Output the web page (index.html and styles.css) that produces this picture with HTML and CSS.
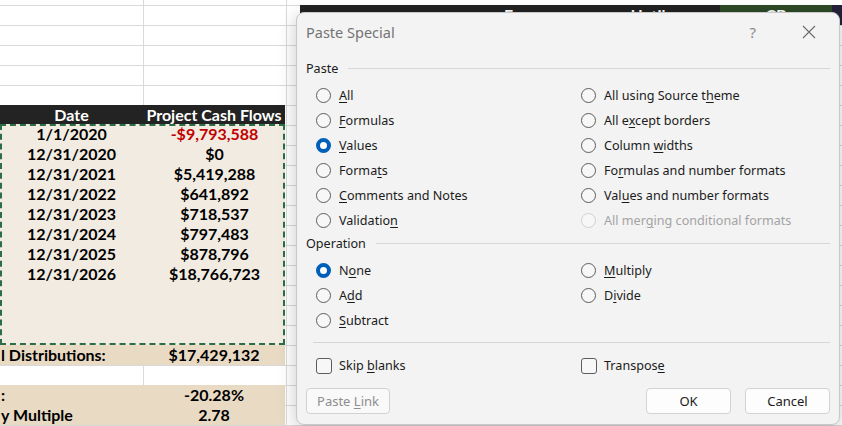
FILE: index.html
```html
<!doctype html>
<html lang="en">
<head>
    <meta charset="UTF-8">
    <title>Paste Special</title>
    <link rel="stylesheet" href="styles.css">
</head>
<body>
<div class="page">
    <div class="sheet">
        <div class="row row-top"></div>
        <div class="row banner">
            <span class="cell"></span><span class="cell"></span><span class="spacer"></span>
            <span class="band-dark"><span class="from">From</span><span class="until">Until</span></span>
            <span class="band-green">CB</span>
            <span class="band-navy"></span>
        </div>
        <div class="row"></div>
        <div class="row"></div>
        <div class="row"></div>
        <div class="row"></div>
        <div class="row head"><span class="cell">Date</span><span class="cell">Project Cash Flows</span></div>
        <div class="block">
            <div class="row"><span class="cell">1/1/2020</span><span class="cell neg">-$9,793,588</span></div>
            <div class="row"><span class="cell">12/31/2020</span><span class="cell">$0</span></div>
            <div class="row"><span class="cell">12/31/2021</span><span class="cell">$5,419,288</span></div>
            <div class="row"><span class="cell">12/31/2022</span><span class="cell">$641,892</span></div>
            <div class="row"><span class="cell">12/31/2023</span><span class="cell">$718,537</span></div>
            <div class="row"><span class="cell">12/31/2024</span><span class="cell">$797,483</span></div>
            <div class="row"><span class="cell">12/31/2025</span><span class="cell">$878,796</span></div>
            <div class="row"><span class="cell">12/31/2026</span><span class="cell">$18,766,723</span></div>
        </div>
        <div class="row total"><span class="cell left">l Distributions:</span><span class="cell">$17,429,132</span></div>
        <div class="row"></div>
        <div class="row stat"><span class="cell left">:</span><span class="cell">-20.28%</span></div>
        <div class="row stat"><span class="cell left">y Multiple</span><span class="cell">2.78</span></div>
    </div>

    <div class="dialog">
        <div class="titlebar">
            <span class="title">Paste Special</span>
            <span class="help">?</span>
            <span class="close">
                <svg width="14" height="14" viewBox="0 0 14 14"><path d="M1 1 L13 13 M13 1 L1 13" stroke="#6b6b6b" stroke-width="1.1" fill="none"/></svg>
            </span>
        </div>

        <div class="group"><span>Paste</span></div>
        <div class="options">
            <div class="opt"><span class="radio"></span><span><u>A</u>ll</span></div>
            <div class="opt"><span class="radio"></span><span>All using Source t<u>h</u>eme</span></div>
            <div class="opt"><span class="radio"></span><span><u>F</u>ormulas</span></div>
            <div class="opt"><span class="radio"></span><span>All e<u>x</u>cept borders</span></div>
            <div class="opt"><span class="radio on"></span><span><u>V</u>alues</span></div>
            <div class="opt"><span class="radio"></span><span>Column <u>w</u>idths</span></div>
            <div class="opt"><span class="radio"></span><span>Forma<u>t</u>s</span></div>
            <div class="opt"><span class="radio"></span><span>Fo<u>r</u>mulas and number formats</span></div>
            <div class="opt"><span class="radio"></span><span><u>C</u>omments and Notes</span></div>
            <div class="opt"><span class="radio"></span><span>Val<u>u</u>es and number formats</span></div>
            <div class="opt"><span class="radio"></span><span>Validatio<u>n</u></span></div>
            <div class="opt disabled"><span class="radio"></span><span>All mer<u>g</u>ing conditional formats</span></div>
        </div>

        <div class="group"><span>Operation</span></div>
        <div class="options">
            <div class="opt"><span class="radio on"></span><span>N<u>o</u>ne</span></div>
            <div class="opt"><span class="radio"></span><span><u>M</u>ultiply</span></div>
            <div class="opt"><span class="radio"></span><span>A<u>d</u>d</span></div>
            <div class="opt"><span class="radio"></span><span>D<u>i</u>vide</span></div>
            <div class="opt"><span class="radio"></span><span><u>S</u>ubtract</span></div>
        </div>

        <div class="separator"></div>

        <div class="options checks">
            <div class="opt"><span class="check"></span><span>Skip <u>b</u>lanks</span></div>
            <div class="opt"><span class="check"></span><span>Transpos<u>e</u></span></div>
        </div>

        <div class="buttons">
            <button class="btn disabled">Paste <u>L</u>ink</button>
            <span class="grow"></span>
            <button class="btn">OK</button>
            <button class="btn">Cancel</button>
        </div>
    </div>
</div>
</body>
</html>
```

FILE: styles.css
```css
body {
    margin: 0;
}

.page {
    position: relative;
    width: 842px;
    height: 426px;
    overflow: hidden;
    background: #fff;
}

/* spreadsheet behind the dialog */
.sheet {
    height: 100%;
    font-family: Lato, "Liberation Sans", sans-serif;
    font-weight: 700;
    font-size: 16px;
    color: #000;
    background-image:
        linear-gradient(#d9d9d9, #d9d9d9),
        linear-gradient(#d9d9d9, #d9d9d9),
        repeating-linear-gradient(to bottom, #d9d9d9 0 1px, transparent 1px 20px);
    background-size: 1px 100%, 1px 100%, 100% 100%;
    background-position: 143px 0, 286px 0, 0 5px;
    background-repeat: no-repeat, no-repeat, repeat;
}

.row {
    display: flex;
    height: 20px;
    line-height: 20px;
}

.row-top {
    height: 5px;
}

.cell {
    width: 143px;
    flex: none;
    text-align: center;
    white-space: nowrap;
    overflow: hidden;
}

.cell.left {
    text-align: left;
    padding-left: 1px;
    box-sizing: border-box;
}

.neg {
    color: #c00000;
}

.spacer {
    width: 14px;
    flex: none;
}

.band-dark {
    width: 420px;
    flex: none;
    background: #222;
    color: #fff;
}

.band-dark .from {
    margin-left: 204px;
}

.band-dark .until {
    margin-left: 90px;
}

.band-green {
    width: 112px;
    flex: none;
    background: #2d4a26;
    color: #fff;
    text-align: center;
}

.band-navy {
    flex: 1;
    background: #23223a;
}

.head {
    height: 19px;
    line-height: 19px;
}

.head .cell {
    background: #232323;
    color: #fff;
}

.head .cell + .cell {
    width: 142px;
}

.block {
    width: 285px;
    height: 221px;
    background: #f2ebe1;
    outline: 2px dashed #2b6d44;
    outline-offset: -2px;
}

.total .cell,
.stat .cell {
    background: #e9dac4;
}

.total .cell + .cell,
.stat .cell + .cell {
    width: 142px;
}

/* dialog */
.dialog {
    position: absolute;
    left: 296px;
    top: 12px;
    width: 544px;
    height: 413px;
    box-sizing: border-box;
    padding: 0 9px 0 9px;
    background: #f3f3f3;
    border: 1px solid #c8c8c8;
    border-radius: 8px;
    box-shadow: 0 4px 18px rgba(0, 0, 0, 0.22);
    font-family: "Noto Sans", "Open Sans", sans-serif;
    font-size: 12.6px;
    color: #1b1b1b;
}

.dialog u {
    text-decoration-thickness: 1px;
    text-underline-offset: 2px;
}

.titlebar {
    display: flex;
    align-items: center;
    height: 37px;
    margin-bottom: 8px;
}

.title {
    flex: 1;
    font-size: 14.5px;
    color: #737373;
}

.help {
    font-size: 15px;
    color: #8a8a8a;
    margin-right: 46px;
}

.close {
    display: flex;
    margin-right: 14px;
}

.group {
    display: flex;
    align-items: center;
    gap: 10px;
    height: 20px;
    margin-bottom: 5px;
}

.group::after {
    content: '';
    flex: 1;
    height: 1px;
    background: #d6d6d6;
}

.options {
    display: grid;
    grid-template-columns: 265px 1fr;
    grid-auto-rows: 25px;
    padding-left: 10px;
}

.opt {
    display: flex;
    align-items: center;
    gap: 8px;
    white-space: nowrap;
}

.radio {
    width: 15px;
    height: 15px;
    box-sizing: border-box;
    border: 1px solid #5c5c5c;
    border-radius: 50%;
    background: #f7f7f7;
    flex: none;
}

.radio.on {
    border: 4.5px solid #005fb8;
    background: #fff;
}

.opt.disabled {
    color: #a3a3a3;
}

.opt.disabled .radio {
    border-color: #d0d0d0;
}

.separator {
    height: 1px;
    background: #d6d6d6;
    margin: 9px 0 10px 7px;
}

.check {
    width: 16px;
    height: 16px;
    box-sizing: border-box;
    border: 1px solid #5c5c5c;
    border-radius: 3px;
    background: #f7f7f7;
    flex: none;
}

.checks .opt {
    gap: 7px;
}

.buttons {
    display: flex;
    gap: 14px;
    margin-top: 10px;
}

.grow {
    flex: 1;
}

.btn {
    width: 85px;
    height: 26px;
    border: 1px solid #d2d2d2;
    border-radius: 4px;
    background: #fdfdfd;
    font-family: inherit;
    font-size: 13px;
    color: #1b1b1b;
    padding: 0;
}

.btn.disabled {
    width: 84px;
    color: #8e8e8e;
    background: #f9f9f9;
}
```
